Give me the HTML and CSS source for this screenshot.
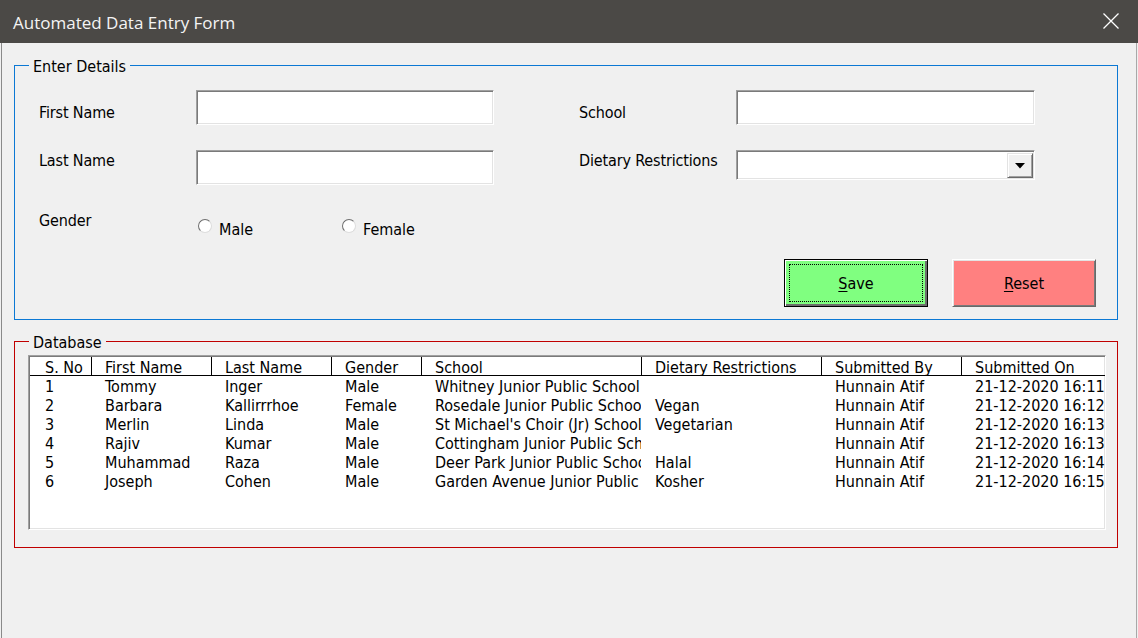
FILE: index.html
```html
<!DOCTYPE html>
<html>
<head>
<meta charset="utf-8">
<title>Automated Data Entry Form</title>
<link rel="stylesheet" href="styles.css">
</head>
<body>
<div class="window">
  <div class="titlebar">
    <span class="title">Automated Data Entry Form</span>
    <svg class="close" width="16" height="16" viewBox="0 0 16 16"><path d="M0.5 0.5 L15.5 15.5 M15.5 0.5 L0.5 15.5" stroke="#ffffff" stroke-width="1.3" fill="none"/></svg>
  </div>
  <div class="client">
    <section class="frame frame-details">
      <span class="frame-title">Enter Details</span>
      <div class="fields">
        <label class="lbl lbl-r1">First Name</label>
        <div class="textbox"></div>
        <span></span>
        <label class="lbl lbl-r1">School</label>
        <div class="textbox"></div>

        <label class="lbl lbl-r2">Last Name</label>
        <div class="textbox"></div>
        <span></span>
        <label class="lbl lbl-r2">Dietary Restrictions</label>
        <div class="combo"><div class="combo-btn"><svg width="10" height="6" viewBox="0 0 10 6"><path d="M0 0 H10 L5 5.5 Z" fill="#000"/></svg></div></div>

        <label class="lbl lbl-r3">Gender</label>
        <div class="radios">
          <span class="radio"><span class="dot"></span><span>Male</span></span>
          <span class="radio"><span class="dot"></span><span>Female</span></span>
        </div>
      </div>
      <div class="actions">
        <button class="btn btn-save"><u>S</u>ave</button>
        <button class="btn btn-reset"><u>R</u>eset</button>
      </div>
    </section>

    <section class="frame frame-db">
      <span class="frame-title">Database</span>
      <div class="listview">
        <div class="grid">
          <div class="hd">S. No</div><div class="hd">First Name</div><div class="hd">Last Name</div><div class="hd">Gender</div><div class="hd">School</div><div class="hd">Dietary Restrictions</div><div class="hd">Submitted By</div><div class="hd">Submitted On</div>

          <div class="cell">1</div><div class="cell">Tommy</div><div class="cell">Inger</div><div class="cell">Male</div><div class="cell">Whitney Junior Public School</div><div class="cell"></div><div class="cell">Hunnain Atif</div><div class="cell">21-12-2020 16:11</div>
          <div class="cell">2</div><div class="cell">Barbara</div><div class="cell">Kallirrrhoe</div><div class="cell">Female</div><div class="cell">Rosedale Junior Public School</div><div class="cell">Vegan</div><div class="cell">Hunnain Atif</div><div class="cell">21-12-2020 16:12</div>
          <div class="cell">3</div><div class="cell">Merlin</div><div class="cell">Linda</div><div class="cell">Male</div><div class="cell">St Michael's Choir (Jr) School</div><div class="cell">Vegetarian</div><div class="cell">Hunnain Atif</div><div class="cell">21-12-2020 16:13</div>
          <div class="cell">4</div><div class="cell">Rajiv</div><div class="cell">Kumar</div><div class="cell">Male</div><div class="cell">Cottingham Junior Public School</div><div class="cell"></div><div class="cell">Hunnain Atif</div><div class="cell">21-12-2020 16:13</div>
          <div class="cell">5</div><div class="cell">Muhammad</div><div class="cell">Raza</div><div class="cell">Male</div><div class="cell">Deer Park Junior Public School</div><div class="cell">Halal</div><div class="cell">Hunnain Atif</div><div class="cell">21-12-2020 16:14</div>
          <div class="cell">6</div><div class="cell">Joseph</div><div class="cell">Cohen</div><div class="cell">Male</div><div class="cell">Garden Avenue Junior Public School</div><div class="cell">Kosher</div><div class="cell">Hunnain Atif</div><div class="cell">21-12-2020 16:15</div>
        </div>
      </div>
    </section>
  </div>
</div>
</body>
</html>
```

FILE: styles.css
```css
* { box-sizing: border-box; }

html, body {
  margin: 0;
  padding: 0;
  width: 1138px;
  height: 638px;
  overflow: hidden;
  background: #f0f0f0;
}

body {
  font-family: "DejaVu Sans Condensed", "DejaVu Sans", sans-serif;
  font-stretch: condensed;
  font-size: 16px;
  color: #000;
}

.window {
  width: 1138px;
  height: 638px;
  display: flex;
  flex-direction: column;
}

.titlebar {
  height: 43px;
  flex: none;
  background: #4b4946;
  display: flex;
  align-items: center;
  justify-content: space-between;
  padding: 0 19px 0 13px;
}

.title {
  font-family: "Open Sans", "Noto Sans", sans-serif;
  font-stretch: normal;
  font-size: 17px;
  color: #f4f4f4;
  margin-top: 1px;
}

.close { display: block; margin-top: -1px; }

.client {
  flex: 1;
  margin: 0 1px;
  border-left: 1px solid #8a8a8a;
  border-right: 1px solid #a8a8a8;
  padding: 22px 0 0 12px;
  display: flex;
  flex-direction: column;
}

.frame {
  position: relative;
  width: 1104px;
  border: 1px solid #0b78d4;
}

.frame-title {
  position: absolute;
  top: -9px;
  left: 14px;
  padding: 0 4px;
  background: #f0f0f0;
  line-height: 19px;
  white-space: nowrap;
}

.frame-details {
  height: 255px;
  padding: 24px 21px 0 24px;
}

.frame-db {
  margin-top: 21px;
  height: 207px;
  border-color: #c00000;
  padding: 13px 0 0 13px;
}

/* form grid */
.fields {
  display: grid;
  grid-template-columns: 157px 298px 85px 157px 299px;
  grid-template-rows: 35px 34px 29px;
  row-gap: 25px;
  align-items: start;
}

.lbl { line-height: 19px; white-space: nowrap; letter-spacing: -0.15px; }
.lbl-r1 { margin-top: 13px; }
.lbl-r2 { margin-top: 1px; }
.lbl-r3 { margin-top: 2px; }

.textbox, .combo {
  background: #fff;
  border: 1px solid;
  border-color: #a0a0a0 #fff #fff #a0a0a0;
  box-shadow: inset 1px 1px #7a7a7a, inset -1px -1px #e3e3e3;
}

.textbox { height: 35px; }

.combo {
  height: 30px;
  display: flex;
  justify-content: flex-end;
  padding: 2px 1px 1px 2px;
}

.combo-btn {
  width: 26px;
  height: 100%;
  background: #f0f0f0;
  border: 1px solid;
  border-color: #e3e3e3 #696969 #696969 #e3e3e3;
  box-shadow: inset 1px 1px #fff, inset -1px -1px #a0a0a0;
  display: flex;
  align-items: center;
  justify-content: center;
}
.combo-btn svg { display: block; margin-top: 1px; }

.radios {
  display: flex;
  margin-top: 11px;
  padding-left: 2px;
}

.radio {
  display: flex;
  align-items: flex-start;
  width: 144px;
  line-height: 19px;
  white-space: nowrap;
}

.dot {
  width: 14px;
  height: 14px;
  border-radius: 50%;
  background: #fff;
  border: 1px solid;
  border-color: #6e6e6e #dcdcdc #dcdcdc #6e6e6e;
  margin-right: 7px;
  margin-top: -1px;
  flex: none;
}

.actions {
  display: flex;
  justify-content: flex-end;
  gap: 24px;
  margin-top: 21px;
}

.btn {
  width: 144px;
  height: 48px;
  font: inherit;
  font-size: 16px;
  color: #000;
  padding: 0;
  cursor: default;
}

.btn u { text-underline-offset: 2px; }

.btn-save {
  background: #80ff80;
  border: 1px solid #000;
  box-shadow: inset 1px 1px #fff, inset -2px -2px #6e6e6e;
  outline: 1px dotted #000;
  outline-offset: -6px;
}

.btn-reset {
  background: #ff8080;
  border: 1px solid;
  border-color: #fff #696969 #696969 #fff;
  box-shadow: inset 1px 1px #e3e3e3, inset -1px -1px #7a7a7a;
}

/* list view */
.listview {
  width: 1078px;
  height: 175px;
  background: #fff;
  border: 1px solid;
  border-color: #a0a0a0 #fff #fff #a0a0a0;
  box-shadow: inset 1px 1px #7a7a7a, inset -1px -1px #e3e3e3;
  padding: 1px 0 0 1px;
  overflow: hidden;
}

.grid {
  display: grid;
  grid-template-columns: 61px 120px 120px 90px 220px 180px 140px 200px;
  grid-auto-rows: 19px;
}

.hd, .cell {
  white-space: nowrap;
  overflow: hidden;
  padding-left: 14px;
}

.hd {
  height: 19px;
  line-height: 18px;
  padding-top: 2px;
  border-bottom: 1px solid #000;
  border-left: 1px solid #000;
  padding-left: 13px;
}

.hd:first-child { border-left: none; padding-left: 15px; }

.cell { line-height: 19px; padding-top: 1px; }
.cell:nth-child(8n+1) { padding-left: 15px; }
```
